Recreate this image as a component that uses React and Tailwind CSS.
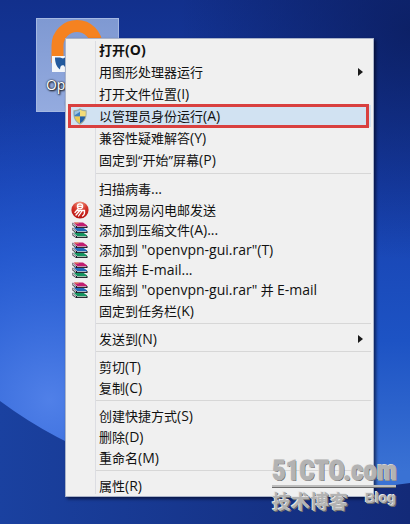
import { useId } from 'react'

const groups = [
  {
    rowClass: 'h-[22px]',
    items: [
      { label: '打开(O)', bold: true },
      { label: '用图形处理器运行', submenu: true },
      { label: '打开文件位置(I)' },
      { label: '以管理员身份运行(A)', icon: 'shield', active: true },
      { label: '兼容性疑难解答(Y)' },
      { label: '固定到“开始”屏幕(P)' },
    ],
  },
  {
    items: [
      { label: '扫描病毒...' },
      { label: '通过网易闪电邮发送', icon: 'netease' },
      { label: '添加到压缩文件(A)...', icon: 'rar' },
      { label: '添加到 "openvpn-gui.rar"(T)', icon: 'rar' },
      { label: '压缩并 E-mail...', icon: 'rar' },
      { label: '压缩到 "openvpn-gui.rar" 并 E-mail', icon: 'rar' },
      { label: '固定到任务栏(K)' },
    ],
  },
  { items: [{ label: '发送到(N)', submenu: true }] },
  { items: [{ label: '剪切(T)' }, { label: '复制(C)' }] },
  { items: [{ label: '创建快捷方式(S)' }, { label: '删除(D)' }, { label: '重命名(M)' }] },
  { items: [{ label: '属性(R)' }] },
]

function ShieldIcon() {
  const clip = useId()
  return (
    <svg viewBox="0 0 16 18" className="h-[17px] w-4">
      <clipPath id={clip}>
        <path d="M8 1.5C6 3 4 3.400 2 3.400c-.3 6 1 10 6 12.800 5-2.800 6.300-6.800 6-12.800-2 0-4-.4-6-1.900z" />
      </clipPath>
      <path d="M8 .3C6 2 3.700 2.300 1 2.300c-.5 7 1 12 7 15.400 6-3.400 7.500-8.400 7-15.400-2.700 0-5-.3-7-2z" fill="#a3ae9c" />
      <g clipPath={`url(#${clip})`}>
        <path d="M0 0h8v9H0z" fill="#3d7fc0" />
        <path d="M8 0h8v9H8z" fill="#f2dc78" />
        <path d="M0 9h8v9H0z" fill="#ecca50" />
        <path d="M8 9h8v9H8z" fill="#2460a6" />
        <path d="M2 3l6-2v3L2 8z" fill="#b4d6ea" opacity=".8" />
      </g>
    </svg>
  )
}

function NeteaseIcon() {
  const fill = useId()
  return (
    <svg viewBox="0 0 18 18" className="h-[18px] w-[18px]">
      <radialGradient id={fill} cx=".5" cy=".1" r=".9">
        <stop offset="0" stopColor="#f09a84" />
        <stop offset=".5" stopColor="#d5352b" />
        <stop offset="1" stopColor="#b5100e" />
      </radialGradient>
      <circle cx="9" cy="9" r="8.600" fill={`url(#${fill})`} />
      <g fill="none" stroke="#fff" strokeWidth="1.300" strokeLinecap="round">
        <ellipse cx="9" cy="5.300" rx="2.600" ry="2.500" />
        <path d="M7 5.300h4M7 8L4 11.500M6 9.500h7.500c.3 2.500-.3 4.500-2 5.500M8.500 10L5 14M11 10l-3.500 5" />
      </g>
    </svg>
  )
}

const books = [
  { y: 10, cover: '#14935e', page: '#bfe8d0' },
  { y: 5, cover: '#2468b8', page: '#c9e0f0' },
  { y: 0, cover: '#c01f70', page: '#efb9d2' },
]

function RarIcon() {
  return (
    <svg viewBox="0 0 16 16" className="h-4 w-4">
      {books.map((book) => (
        <g key={book.y} transform={`translate(0 ${book.y})`}>
          <path d="M.5.5L4 4h11.500v2H4L.5 3.500z" fill="#1a1a24" />
          <path d="M1.500.5H11L14.500 3H4z" fill={book.cover} />
          <path d="M4.500 3h10.500v1H4.500z" fill={book.cover} />
          <path d="M1 1.500L4 4.500V5.500L1 3z" fill="#d5d5dd" />
          <path d="M5 4.200h9.500v.9H5z" fill={book.page} />
        </g>
      ))}
      <path d="M2.500.5H6l1 1H3.500z" fill="#e6a850" />
    </svg>
  )
}

const icons = { shield: ShieldIcon, netease: NeteaseIcon, rar: RarIcon }

// latin runs are set one size larger than the chinese ones
function Label({ text }) {
  return text.split(/([\x21-\x7e]+)/).map((part, i) =>
    i % 2 ? <span key={i} className="text-[14px]">{part}</span> : part
  )
}

function MenuItem({ item, rowClass }) {
  const Icon = icons[item.icon]
  const height = item.icon === 'rar' ? 'h-5' : rowClass || 'h-[21px]'
  return (
    <li role="none" className="relative">
      <button
        type="button"
        role="menuitem"
        aria-haspopup={item.submenu ? 'menu' : undefined}
        className={`flex w-full items-center whitespace-nowrap text-left ${height} ${item.bold ? 'font-bold' : ''} ${item.active ? 'bg-[#d1e2f2]' : ''}`}
      >
        <span className="flex w-[31px] shrink-0 justify-center pr-2">{Icon && <Icon />}</span>
        <span className="grow whitespace-pre"><Label text={item.label} /></span>
        {item.submenu && (
          <svg viewBox="0 0 5 8" className="mr-2 h-2 w-[5px]">
            <path d="M0 0l5 4-5 4z" fill="#1a1a1a" />
          </svg>
        )}
      </button>
      {item.active && <div className="pointer-events-none absolute inset-y-0 right-[2px] left-0 -my-px border-3 border-[#d9403f]" />}
    </li>
  )
}

function ContextMenu() {
  return (
    <ul role="menu" className="relative border border-[#a9b3c9] bg-[#f0f0f0] px-[2px] text-[13px] leading-5 text-[#111] shadow-[2px_2px_3px_rgba(0,0,20,0.6)]">
      <li role="none" className="absolute inset-y-[2px] left-[29px] w-px bg-[#dcdde2]" />
      {groups.map((group, i) => (
        <li role="none" key={i}>
          {i > 0 && <div role="separator" className="ml-[28px] h-[7px] pt-[2px]"><div className="h-px bg-[#d7d7d7]" /></div>}
          <ul role="group">
            {group.items.map((item) => (
              <MenuItem key={item.label} item={item} rowClass={group.rowClass} />
            ))}
          </ul>
        </li>
      ))}
    </ul>
  )
}

function DesktopIcon() {
  return (
    <div className="absolute top-[18px] left-9 h-[94px] w-[83px] border border-[#a5b8e2] bg-linear-to-b from-[#7f99d2] to-[#94abdf]">
      <svg viewBox="0 0 81 57" className="w-full">
        <path d="M20.500 44V26.500a19.500 19.500 0 0 1 39 0V44" fill="none" stroke="#f58220" strokeWidth="12" />
        <path d="M15 37h16v16H15z" fill="#f3f6fa" />
        <path d="M18 38.500h5l3 1 4-2v14l-3-5c-2-1-4 0-4 4-4-3-5-8-5-12z" fill="#235a9e" />
      </svg>
      <p className="text-center text-[14px] leading-[18px] font-medium text-white [text-shadow:1px_1px_2px_#000,0_0_2px_#000]">OpenVPN GUI</p>
    </div>
  )
}

function Wallpaper() {
  return (
    <svg viewBox="0 0 410 524" preserveAspectRatio="none" className="absolute inset-0 h-full w-full">
      <defs>
        <linearGradient id="sky" x1="0" y1="0" x2="0" y2="1">
          <stop offset="0" stopColor="#12308c" />
          <stop offset=".35" stopColor="#1740ae" />
          <stop offset=".65" stopColor="#1d53c4" />
          <stop offset=".9" stopColor="#3a72d4" />
        </linearGradient>
        <radialGradient id="glow" gradientUnits="userSpaceOnUse" cx="50" cy="400" r="300">
          <stop offset="0" stopColor="#5080e8" />
          <stop offset=".5" stopColor="#2a60d8" stopOpacity=".7" />
          <stop offset="1" stopColor="#1d50c8" stopOpacity="0" />
        </radialGradient>
        <radialGradient id="shade" gradientUnits="userSpaceOnUse" cx="410" cy="30" r="230">
          <stop offset="0" stopColor="#0b1c5c" stopOpacity=".8" />
          <stop offset="1" stopColor="#0b1c5c" stopOpacity="0" />
        </radialGradient>
        <linearGradient id="ground" x1="0" y1="0" x2="1" y2="0">
          <stop offset="0" stopColor="#1a41a0" />
          <stop offset="1" stopColor="#132a78" />
        </linearGradient>
      </defs>
      <path d="M0 0h410v524H0z" fill="url(#sky)" />
      <path d="M0 0h410v524H0z" fill="url(#glow)" />
      <path d="M0 0h410v524H0z" fill="url(#shade)" />
      <path d="M0 401Q160 520 410 483V524H0z" fill="url(#ground)" />
    </svg>
  )
}

function Watermark() {
  return (
    <div className="absolute right-[14px] bottom-2 w-[124px] font-bold whitespace-nowrap text-[#b3b3b3] [text-shadow:-1px_-1px_0_#e6e6e6,1px_1px_0_#6c6c6c]">
      <p className="font-['Roboto_Condensed','Open_Sans_Condensed','Noto_Sans_Condensed','Liberation_Sans',sans-serif] text-[27px] leading-7 [-webkit-text-stroke:1px_#b3b3b3]">51CTO.com</p>
      <div className="h-[3px] border-b border-[#6c6c6c] bg-[#bdbdbd]" />
      <div className="flex justify-between">
        <span className="text-[19px] leading-7">技术博客</span>
        <span className="font-['Liberation_Sans',sans-serif] text-[14px] leading-5">Blog</span>
      </div>
    </div>
  )
}

export default function App() {
  return (
    <main className="relative min-h-screen overflow-hidden bg-[#1740ae] pt-[38px] pr-[36px] pl-[65px] font-['Open_Sans','Noto_Sans_CJK_SC',sans-serif]">
      <Wallpaper />
      <DesktopIcon />
      <ContextMenu />
      <Watermark />
    </main>
  )
}
